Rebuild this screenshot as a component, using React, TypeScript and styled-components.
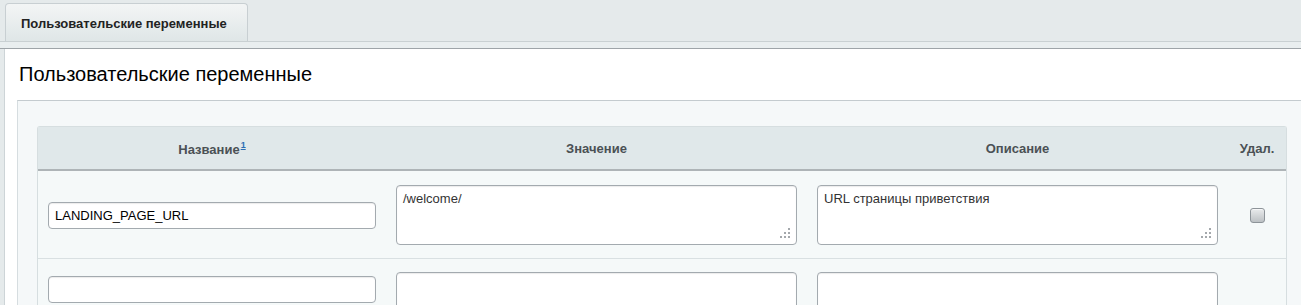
import * as React from "react";
import styled, { createGlobalStyle } from "styled-components";

const GlobalStyle = createGlobalStyle`
  html, body {
    margin: 0;
    padding: 0;
    overflow: hidden;
    background: #e5eaeb;
  }
  body {
    font-family: "Liberation Sans", Arial, sans-serif;
  }
`;

const Page = styled.div`
  width: 1320px;
  min-height: 305px;
  background: #e5eaeb;
`;

const TabBar = styled.div`
  display: flex;
  height: 38px;
  padding: 3px 0 0 5px;
  border-bottom: 1px solid #c9d0d2;
`;

const Tab = styled.div`
  height: 38px;
  margin-bottom: -1px;
  padding: 0 15px;
  line-height: 40px;
  font-size: 13px;
  font-weight: bold;
  color: #222;
  border: 1px solid #c8cfd2;
  border-bottom: none;
  border-radius: 4px 4px 0 0;
  background: linear-gradient(#f3f5f5, #dfe6e7);
  box-sizing: border-box;
  width: 243px;
`;

const Strip = styled.div`
  height: 6px;
  background: #e9eeef;
  border-bottom: 1px solid #9ea4a8;
`;

const Panel = styled.div`
  margin-left: 4px;
  background: #fff;
  border-left: 1px solid #cdd4d7;
`;

const Title = styled.h2`
  margin: 0;
  padding: 13px 0 14px 14px;
  font-size: 20px;
  line-height: 24px;
  font-weight: normal;
  color: #000;
`;

const Inner = styled.div`
  margin-left: 12px;
  padding: 25px 20px 20px 19px;
  background: #f5f8f9;
  border-top: 1px solid #c4cbcf;
  border-left: 1px solid #d6dde0;
`;

const Table = styled.table`
  width: 1250px;
  table-layout: fixed;
  border-collapse: separate;
  border-spacing: 0;
  border: 1px solid #d6dee0;
  border-bottom: none;
  border-radius: 3px 3px 0 0;
`;

const Th = styled.th`
  height: 42px;
  padding: 0;
  background: #e0e8ea;
  border-bottom: 2px solid #aeb4b7;
  font-size: 13px;
  font-weight: bold;
  color: #4b5155;
  text-align: center;
  vertical-align: middle;
`;

const Sup = styled.a`
  font-size: 9px;
  color: #2a6db3;
  text-decoration: underline;
  vertical-align: 6px;
  margin-left: 1px;
`;

const Td = styled.td<{ $center?: boolean; $top?: boolean }>`
  padding: ${(p) => (p.$top ? "13px 10px 0" : "14px 10px 13px")};
  background: #f5f9f9;
  border-bottom: 1px solid #d9e0e2;
  vertical-align: ${(p) => (p.$top ? "top" : "middle")};
  text-align: ${(p) => (p.$center ? "center" : "left")};
`;

const TextInput = styled.input<{ $offset?: boolean }>`
  display: block;
  box-sizing: border-box;
  width: 100%;
  height: 27px;
  margin-top: ${(p) => (p.$offset ? "4px" : "0")};
  padding: 0 6px;
  border: 1px solid #a3aaaf;
  border-radius: 4px;
  background: #fff;
  box-shadow: inset 0 1px 1px rgba(0, 0, 0, 0.08);
  font-family: "Liberation Sans", Arial, sans-serif;
  font-size: 13px;
  color: #000;
  outline: none;
`;

const AreaWrap = styled.div`
  position: relative;
`;

const Area = styled.textarea`
  display: block;
  box-sizing: border-box;
  width: 100%;
  height: 60px;
  padding: 5px 6px;
  border: 1px solid #a3aaaf;
  border-radius: 4px;
  background: #fff;
  box-shadow: inset 0 1px 1px rgba(0, 0, 0, 0.08);
  font-family: "Liberation Sans", Arial, sans-serif;
  font-size: 13px;
  color: #333;
  resize: none;
  outline: none;
`;

const Grip = styled.svg`
  position: absolute;
  right: 6px;
  bottom: 6px;
  width: 12px;
  height: 12px;
`;

const Check = styled.span`
  display: inline-block;
  width: 13px;
  height: 13px;
  border: 1px solid #8d9499;
  border-radius: 3px;
  background: linear-gradient(#e9ebec, #bcc1c4);
  box-shadow: inset 0 1px 0 rgba(255, 255, 255, 0.6);
  vertical-align: middle;
`;

const ResizeGrip = () => (
  <Grip viewBox="0 0 12 12">
    <g fill="#a4a8ac">
      <rect x="9" y="1" width="2" height="2" />
      <rect x="5" y="5" width="2" height="2" />
      <rect x="9" y="5" width="2" height="2" />
      <rect x="1" y="9" width="2" height="2" />
      <rect x="5" y="9" width="2" height="2" />
      <rect x="9" y="9" width="2" height="2" />
    </g>
  </Grip>
);

type Row = { name: string; value: string; desc: string; saved: boolean };

const rows: Row[] = [
  { name: "LANDING_PAGE_URL", value: "/welcome/", desc: "URL страницы приветствия", saved: true },
  { name: "", value: "", desc: "", saved: false },
];

export default function App() {
  return (
    <Page>
      <GlobalStyle />
      <TabBar>
        <Tab>Пользовательские переменные</Tab>
      </TabBar>
      <Strip />
      <Panel>
        <Title>Пользовательские переменные</Title>
        <Inner>
          <Table>
            <colgroup>
              <col style={{ width: 348 }} />
              <col style={{ width: 421 }} />
              <col style={{ width: 421 }} />
              <col style={{ width: 58 }} />
            </colgroup>
            <thead>
              <tr>
                <Th>
                  Название<Sup href="#">1</Sup>
                </Th>
                <Th>Значение</Th>
                <Th>Описание</Th>
                <Th>Удал.</Th>
              </tr>
            </thead>
            <tbody>
              {rows.map((r, i) => (
                <tr key={i}>
                  <Td $top={!r.saved}>
                    <TextInput defaultValue={r.name} $offset={!r.saved} />
                  </Td>
                  <Td $top={!r.saved}>
                    <AreaWrap>
                      <Area defaultValue={r.value} />
                      <ResizeGrip />
                    </AreaWrap>
                  </Td>
                  <Td $top={!r.saved}>
                    <AreaWrap>
                      <Area defaultValue={r.desc} />
                      <ResizeGrip />
                    </AreaWrap>
                  </Td>
                  <Td $center $top={!r.saved}>
                    {r.saved && <Check />}
                  </Td>
                </tr>
              ))}
            </tbody>
          </Table>
        </Inner>
      </Panel>
    </Page>
  );
}
